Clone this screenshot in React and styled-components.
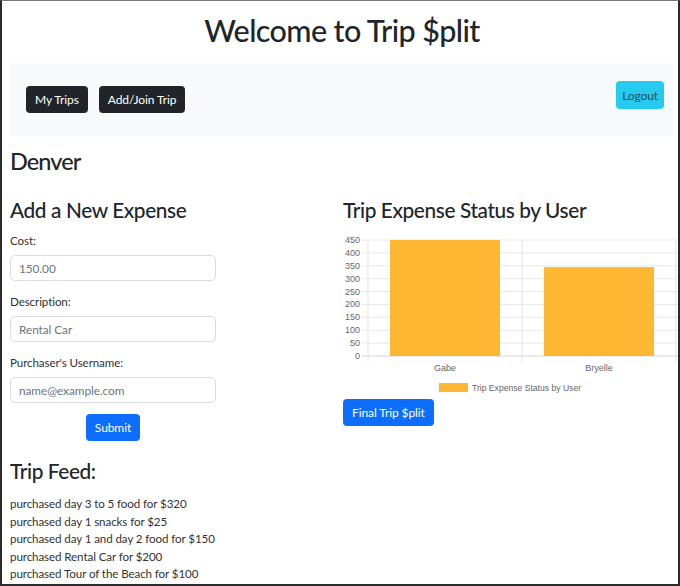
import React from 'react'
import styled, { createGlobalStyle } from 'styled-components';

const GlobalStyle = createGlobalStyle`
    * { box-sizing: border-box; }
    body {
        margin: 0;
        font-family: Lato, "Noto Sans", sans-serif;
        color: #212529;
    }
`;

const Frame = styled.div`
    width: 680px;
    height: 586px;
    overflow: hidden;
    border: 2px solid #2b2b2b;
    border-top: 1px solid #777;
    padding: 0 3px 0 7px;
    background: #fff;
`;

const Title = styled.h1`
    margin: 10px 0 14px;
    font-size: 30.5px;
    letter-spacing: -0.6px;
    line-height: 38px;
    font-weight: 500;
    text-align: center;
`;

const NavBar = styled.nav`
    height: 73px;
    background-color: #f8f9fa;
    display: flex;
    align-items: center;
    padding: 0 9px 0 17px;
    margin-right: 2px;
`;

const NavLinks = styled.div`
    display: flex;
    gap: 11px;
    flex: 1;
`;

const Button = styled.button`
    border: none;
    border-radius: 4px;
    height: 27px;
    padding: 0 ${p => p.$pad ?? 9}px;
    font-family: inherit;
    font-size: 12px;
    letter-spacing: -0.1px;
    background-color: ${p => p.$bg};
    color: ${p => p.$color || '#fff'};
    cursor: pointer;
`;

const LogoutButton = styled(Button)`
    height: 28px;
    padding: 0 6px;
    margin-bottom: 9px;
`;

const TripName = styled.h2`
    margin: 10px 0 21px 1px;
    font-size: 23.5px;
    letter-spacing: -0.9px;
    line-height: 30px;
    font-weight: 500;
`;

const Columns = styled.div`
    display: grid;
    grid-template-columns: 333px 333px;
`;

const Column = styled.div`
    display: flex;
    flex-direction: column;
    align-items: flex-start;
    padding-left: 1px;
`;

const SectionTitle = styled.h3`
    margin: 0 0 ${p => p.$mb ?? 9}px;
    font-size: 20.8px;
    letter-spacing: -0.38px;
    line-height: 25px;
    font-weight: 500;
`;

const Form = styled.form`
    width: 206px;
    display: flex;
    flex-direction: column;
`;

const Label = styled.label`
    font-size: 11.6px;
    letter-spacing: -0.1px;
    line-height: 19px;
    color: #333;
    margin-bottom: 5px;
`;

const Input = styled.input`
    height: 26px;
    width: 206px;
    border: 1px solid #d8dce0;
    border-radius: 5px;
    padding: 0 8px;
    font-family: inherit;
    font-size: 11.8px;
    letter-spacing: -0.05px;
    margin-bottom: 11px;
    &::placeholder { color: #6c757d; }
`;

const SubmitRow = styled.div`
    display: flex;
    justify-content: center;
    margin-bottom: 17px;
`;

const Feed = styled.div`
    display: flex;
    flex-direction: column;
    margin-top: 2px;
    font-size: 11.6px;
    letter-spacing: -0.1px;
    line-height: 17.5px;
    color: #333;
`;

const ChartBox = styled.svg`
    display: block;
    margin: 8px 0 4px;
    overflow: visible;
    font-family: "Liberation Sans", Arial, sans-serif;
`;

const feed = [
    'purchased day 3 to 5 food for $320',
    'purchased day 1 snacks for $25',
    'purchased day 1 and day 2 food for $150',
    'purchased Rental Car for $200',
    'purchased Tour of the Beach for $100',
];

const users = [
    { name: 'Gabe', total: 450, x: 47 },
    { name: 'Bryelle', total: 345, x: 201 },
];

const yOf = v => 126 - v * (116 / 450);

const ExpenseChart = () => {
    const ticks = [0, 50, 100, 150, 200, 250, 300, 350, 400, 450];
    return (
        <ChartBox width="335" height="165" viewBox="0 0 335 165">
            {ticks.map(t => (
                <g key={t}>
                    <line x1="19" x2="335" y1={yOf(t)} y2={yOf(t)} stroke={t === 0 ? '#d6d6d6' : '#e8e8e8'} strokeWidth="1" />
                    <text x="17" y={yOf(t) + 3} fontSize="9" fill="#666" textAnchor="end">{t}</text>
                </g>
            ))}
            {[25, 179, 333].map(x => (
                <line key={x} x1={x} x2={x} y1="10" y2="132" stroke="#e3e3e3" strokeWidth="1" />
            ))}
            {users.map(u => (
                <g key={u.name}>
                    <rect x={u.x} y={yOf(u.total)} width="110" height={126 - yOf(u.total)} fill="#fdb733" />
                    <text x={u.x + 55} y="141" fontSize="9" fill="#666" textAnchor="middle">{u.name}</text>
                </g>
            ))}
            <rect x="96" y="153" width="29" height="9" fill="#fdb733" />
            <text x="129" y="161" fontSize="8.6" fill="#666">Trip Expense Status by User</text>
        </ChartBox>
    );
};

const App = () => {
    return (
        <Frame>
            <GlobalStyle />
            <Title>Welcome to Trip $plit</Title>
            <NavBar>
                <NavLinks>
                    <Button $bg="#212529">My Trips</Button>
                    <Button $bg="#212529">Add/Join Trip</Button>
                </NavLinks>
                <LogoutButton $bg="#25cbee" $color="#1f4f5c">Logout</LogoutButton>
            </NavBar>
            <TripName>Denver</TripName>
            <Columns>
                <Column>
                    <SectionTitle>Add a New Expense</SectionTitle>
                    <Form onSubmit={e => e.preventDefault()}>
                        <Label>Cost:</Label>
                        <Input placeholder="150.00" />
                        <Label>Description:</Label>
                        <Input placeholder="Rental Car" />
                        <Label>Purchaser's Username:</Label>
                        <Input placeholder="name@example.com" />
                        <SubmitRow>
                            <Button $bg="#0d6efd" $pad={9}>Submit</Button>
                        </SubmitRow>
                    </Form>
                    <SectionTitle $mb={10}>Trip Feed:</SectionTitle>
                    <Feed>
                        {feed.map(line => <div key={line}>{line}</div>)}
                    </Feed>
                </Column>
                <Column>
                    <SectionTitle $mb={0}>Trip Expense Status by User</SectionTitle>
                    <ExpenseChart />
                    <Button $bg="#0d6efd">Final Trip $plit</Button>
                </Column>
            </Columns>
        </Frame>
    )
}

export default App
